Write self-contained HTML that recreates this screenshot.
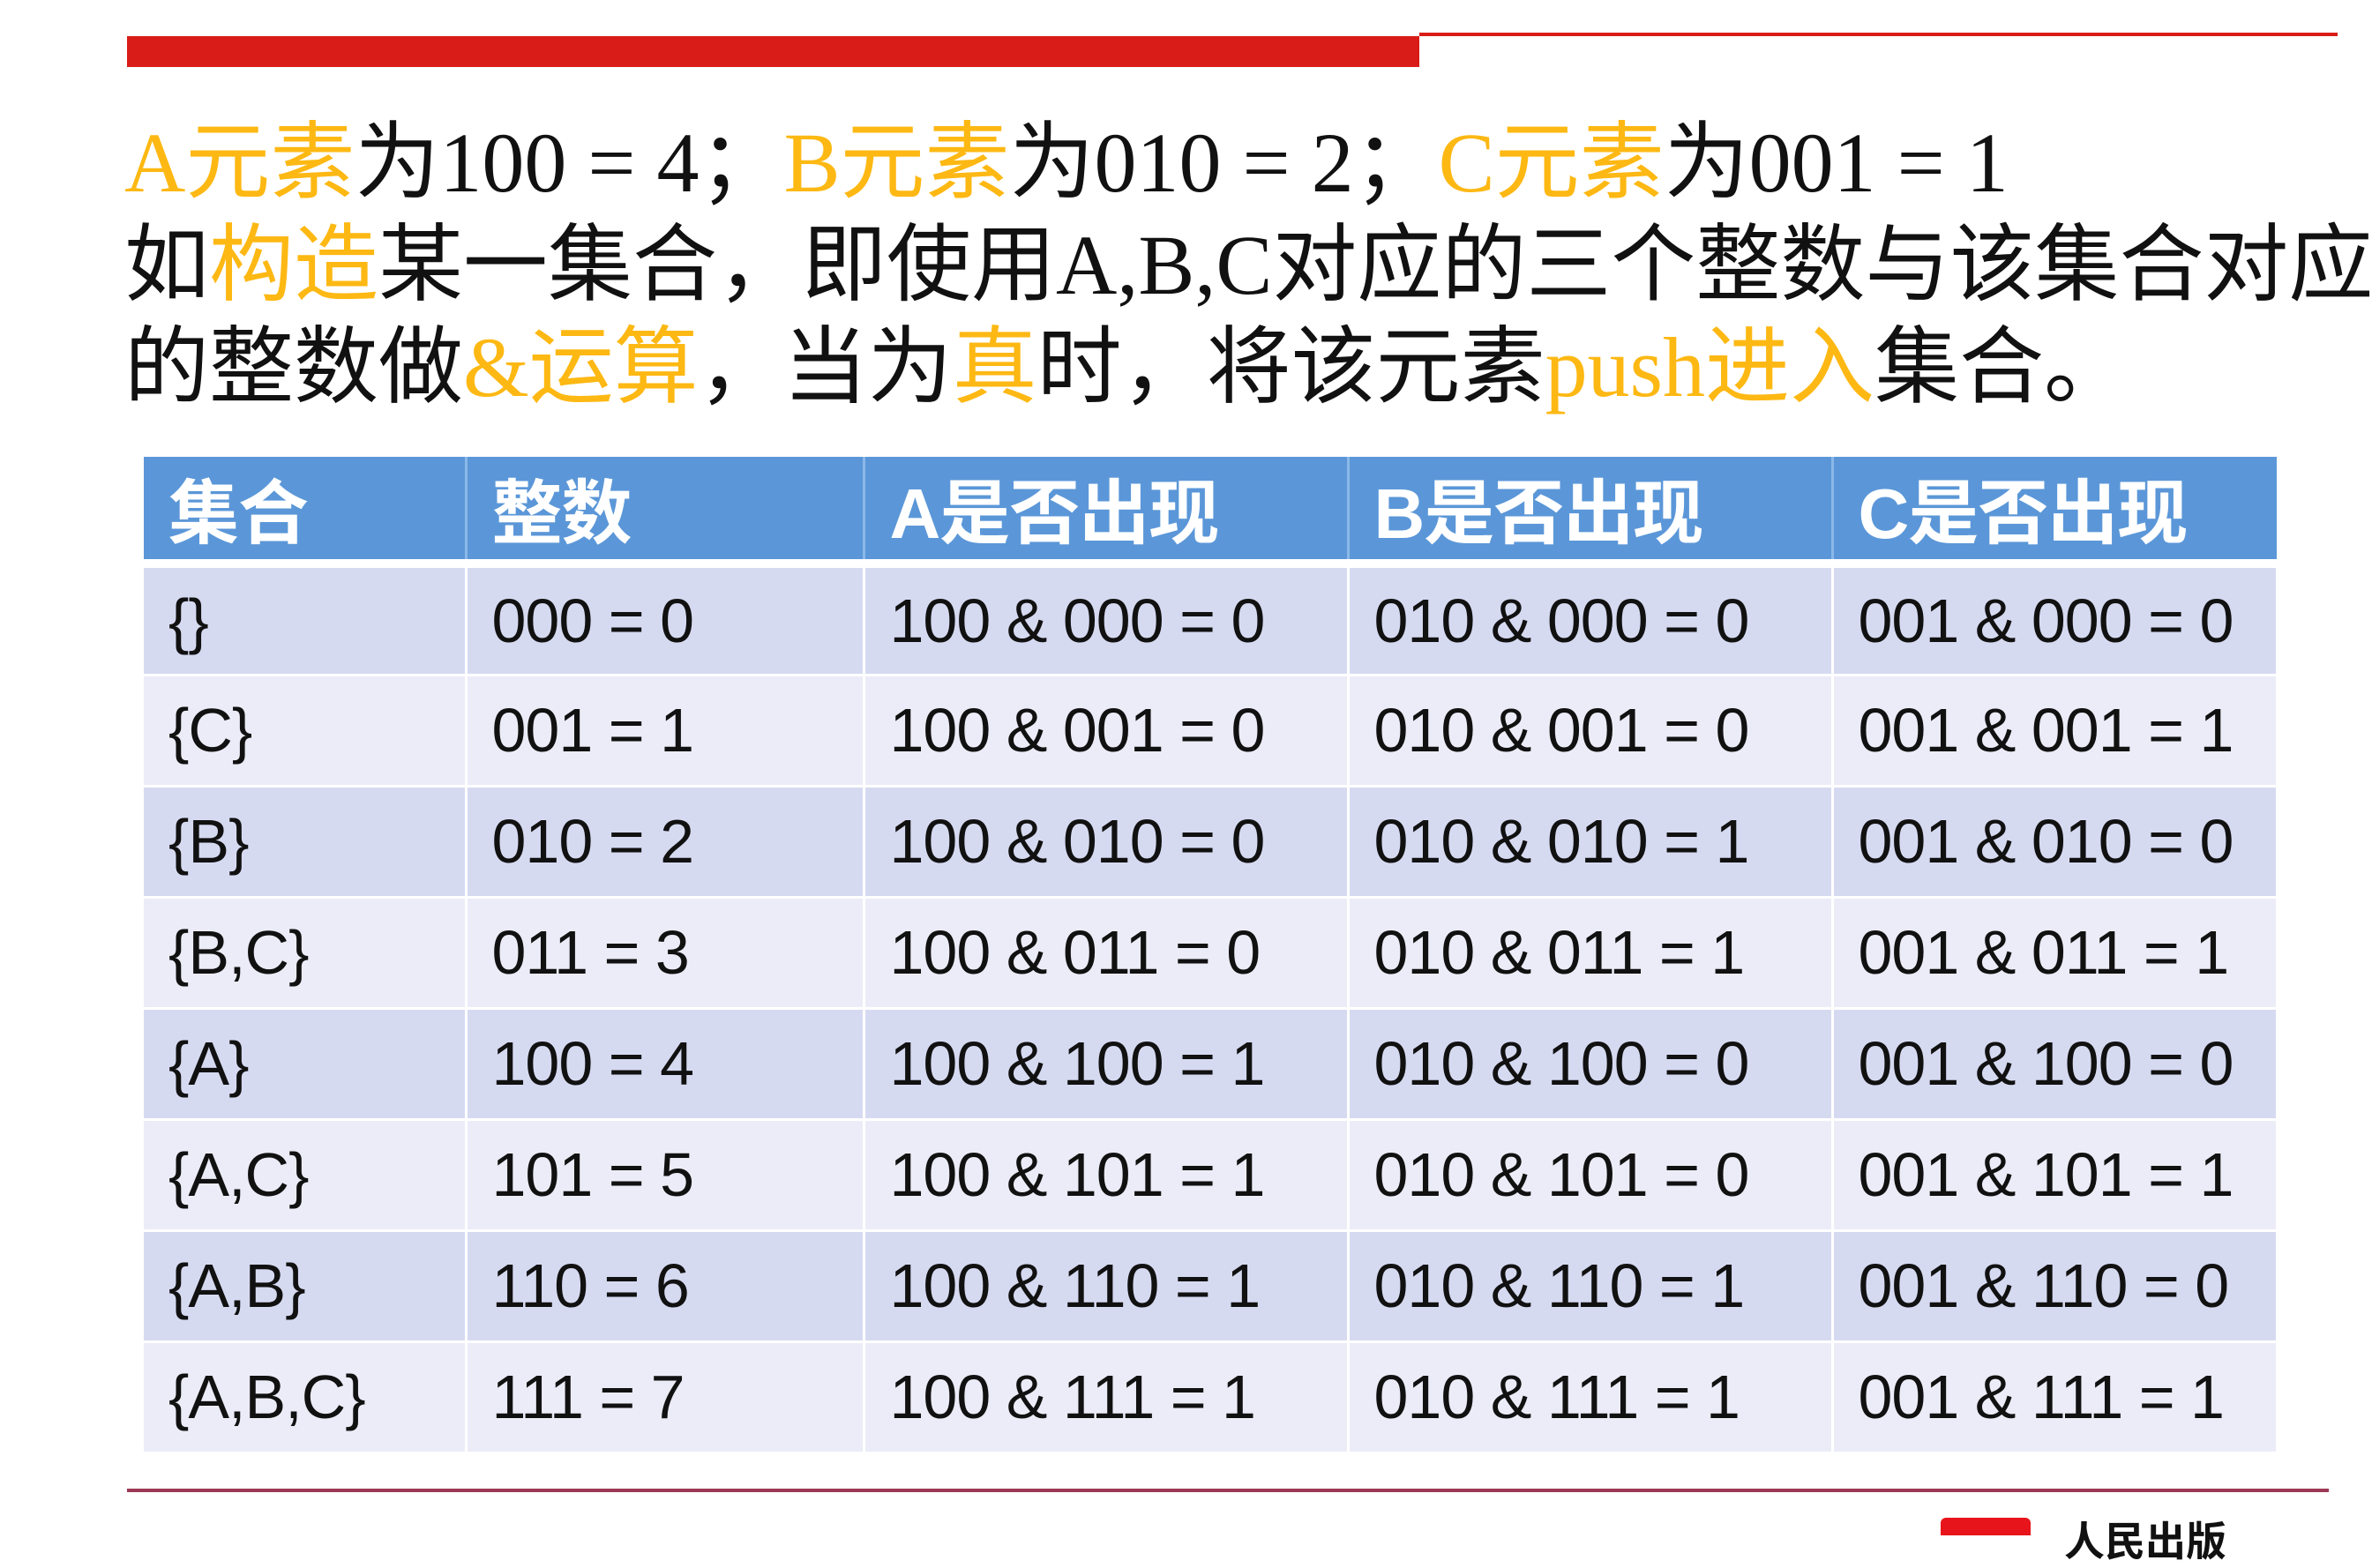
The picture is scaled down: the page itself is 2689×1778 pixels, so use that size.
<!DOCTYPE html>
<html><head><meta charset="utf-8"><style>
*{margin:0;padding:0;box-sizing:border-box}
body{width:2689px;height:1735px;background:#fff;position:relative;overflow:hidden;font-family:"Liberation Serif","Noto Sans CJK SC",sans-serif}
.ln{position:absolute;left:141px;white-space:nowrap;font-size:96px;line-height:1;color:#111}
.o{color:#fdb813}
.s{font-family:"Noto Sans CJK SC",sans-serif}
table{position:absolute;left:163px;top:518px;border-collapse:collapse;font-family:"Liberation Sans","Noto Sans CJK SC",sans-serif}
td,th{height:126px;padding:0 0 0 28px;text-align:left;font-size:70px;font-weight:normal;color:#111;border-right:3px solid #fff;border-bottom:3px solid #fff;letter-spacing:-1px;white-space:nowrap}
th{height:117px;background:#5b97d8;color:#fff;font-weight:bold;font-size:80px;border-right:3px solid #8bb8e8;border-bottom:10px solid #fff}
tr.a td{background:#d6daf1}
tr.b td{background:#ececf8}
</style></head><body>
<div style="position:absolute;left:144px;top:41px;width:1465px;height:35px;background:#d91c17"></div>
<div style="position:absolute;left:1609px;top:37px;width:1041px;height:4px;background:#d91c17"></div>
<div class="ln" style="top:128px"><span class="o">A</span><span class="o s">元素</span><span class="s">为</span>100 = 4<span class="s">；</span><span class="o">B</span><span class="o s">元素</span><span class="s">为</span>010 = 2<span class="s">；</span><span class="o">C</span><span class="o s">元素</span><span class="s">为</span>001 = 1</div>
<div class="ln" style="top:244px"><span class="s">如</span><span class="o s">构造</span><span class="s">某一集合，即使用</span>A,B,C<span class="s">对应的三个整数与该集合对应</span></div>
<div class="ln" style="top:360px"><span class="s">的整数做</span><span class="o">&amp;</span><span class="o s">运算</span><span class="s">，当为</span><span class="o s">真</span><span class="s">时，将该元素</span><span class="o">push</span><span class="o s">进入</span><span class="s">集合。</span></div>
<table>
<tr><th style="width:365px">集合</th><th style="width:451px">整数</th><th style="width:549px">A是否出现</th><th style="width:549px">B是否出现</th><th style="width:504px;border-right:none">C是否出现</th></tr>
<tr class="a"><td>{}</td><td>000 = 0</td><td>100 &amp; 000 = 0</td><td>010 &amp; 000 = 0</td><td>001 &amp; 000 = 0</td></tr>
<tr class="b"><td>{C}</td><td>001 = 1</td><td>100 &amp; 001 = 0</td><td>010 &amp; 001 = 0</td><td>001 &amp; 001 = 1</td></tr>
<tr class="a"><td>{B}</td><td>010 = 2</td><td>100 &amp; 010 = 0</td><td>010 &amp; 010 = 1</td><td>001 &amp; 010 = 0</td></tr>
<tr class="b"><td>{B,C}</td><td>011 = 3</td><td>100 &amp; 011 = 0</td><td>010 &amp; 011 = 1</td><td>001 &amp; 011 = 1</td></tr>
<tr class="a"><td>{A}</td><td>100 = 4</td><td>100 &amp; 100 = 1</td><td>010 &amp; 100 = 0</td><td>001 &amp; 100 = 0</td></tr>
<tr class="b"><td>{A,C}</td><td>101 = 5</td><td>100 &amp; 101 = 1</td><td>010 &amp; 101 = 0</td><td>001 &amp; 101 = 1</td></tr>
<tr class="a"><td>{A,B}</td><td>110 = 6</td><td>100 &amp; 110 = 1</td><td>010 &amp; 110 = 1</td><td>001 &amp; 110 = 0</td></tr>
<tr class="b"><td>{A,B,C}</td><td>111 = 7</td><td>100 &amp; 111 = 1</td><td>010 &amp; 111 = 1</td><td>001 &amp; 111 = 1</td></tr>
</table>
<div style="position:absolute;left:144px;top:1688px;width:2496px;height:4px;background:#9c3a56"></div>
<div style="position:absolute;left:2200px;top:1721px;width:102px;height:20px;background:#e8141b;border-radius:6px 6px 0 0"></div>
<div style="position:absolute;left:2340px;top:1722px;font-size:46px;font-weight:bold;font-family:'Noto Sans CJK SC',sans-serif;color:#111;line-height:1">人民出版</div>
</body></html>
